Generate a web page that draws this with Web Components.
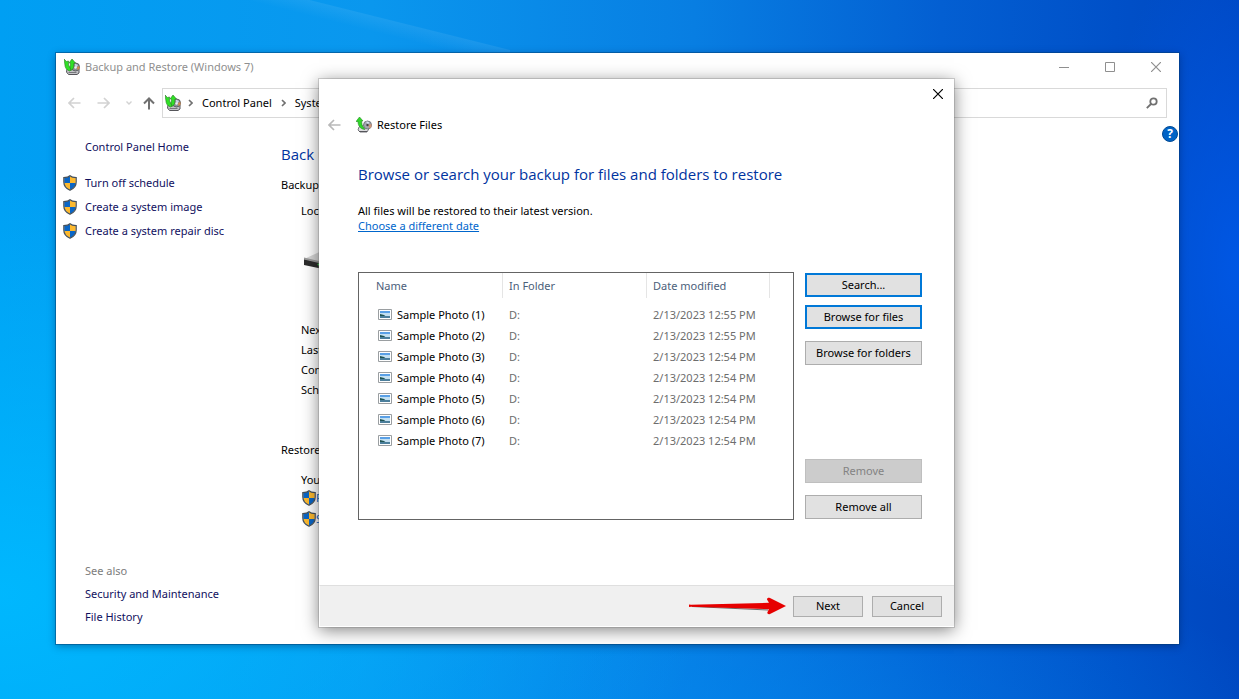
<!DOCTYPE html>
<html lang="en">
<head>
<meta charset="utf-8">
<meta name="viewport" content="width=device-width, initial-scale=1">
<title>Backup and Restore (Windows 7)</title>
<style>
  html, body { margin: 0; min-height: 100%; }
  body {
    font: 11px/18px "Noto Sans", "Open Sans", sans-serif;
    color: #000;
    --link: #10105e;
    --heading: #0033a0;
    --accent: #0078d7;
  }
</style>
</head>
<body>
<desk-top>
  <explorer-window>
    <restore-dialog></restore-dialog>
  </explorer-window>
</desk-top>

<script>
const define = (name, html, setup) => {
  const template = document.createElement('template');
  template.innerHTML = html;
  customElements.define(name, class extends HTMLElement {
    constructor() {
      super();
      this.attachShadow({ mode: 'open' }).append(template.content.cloneNode(true));
    }
    connectedCallback() { if (setup) setup(this, this.shadowRoot); }
  });
};

const ICONS = {
  backup: `<svg viewBox="0 0 16 16" width="16" height="16">
    <path d="M3 10l10-3 2 3v4l-2 1.500H4.500L2.500 13z" fill="#c4c4c8" stroke="#55555a"/>
    <circle cx="11.500" cy="8" r="4" fill="#8d9095" stroke="#5d6065"/>
    <path d="M10.500 4.500l3.500 1.500-2 3z" fill="#cdd6e8"/><path d="M13 8l2.500-1v3l-2 1z" fill="#d08a4e"/><circle cx="11.500" cy="8.500" r="1.200" fill="#eee"/>
    <path d="M4.500 13.500h8" stroke="#77777d"/>
    <path d="M0 0l2.500 2.500L4.500 2v4l3 5-2 1C2.500 11 .8 8.500.800 5z" fill="#2fe025" stroke="#2c7a26" stroke-width=".6"/>
    <path d="M8 0l3.500 4H10l-.5 5-2.500 2.500L6 8l.5-4H5z" fill="#2fe025" stroke="#2c7a26" stroke-width=".6"/>
  </svg>`,
  restore: `<svg viewBox="0 0 16 16" width="16" height="16">
    <path d="M3 10l9-3 2 3-3 5H4l-2-2z" fill="#dcdcdf" stroke="#77777c"/>
    <path d="M3 14.500h8" stroke="#55555a"/>
    <circle cx="11.500" cy="8" r="4" fill="#a2a8b0" stroke="#777b80"/>
    <path d="M10 4.500l3 .500-1 3z" fill="#dce6f4"/><path d="M12 8l3.500-1v3l-2 1.500z" fill="#cf9579"/><circle cx="11.500" cy="8" r="1.200" fill="#444"/>
    <path d="M3.500 0L7 4H5.500l.700 4.500L9 12.500C4.500 12 2 9 2 4.500H0z" fill="#2fd828" stroke="#248a20" stroke-width=".6"/>
  </svg>`,
  shield: `<svg viewBox="0 0 14 16" width="14" height="16">
    <path d="M7 1C5.500 2.200 3.500 2.600 1.200 2.700V7c0 4 2.500 6.500 5.800 8z" fill="#0a66c6"/>
    <path d="M7 1c1.500 1.200 3.500 1.600 5.800 1.700V7c0 4-2.500 6.500-5.800 8z" fill="#fdb92e"/>
    <path d="M1.200 8H7v7C4 13.500 1.500 11.500 1.200 8z" fill="#fdb92e"/>
    <path d="M7 8h5.800c-.3 3.500-2.800 5.500-5.800 7z" fill="#0a66c6"/>
    <path d="M7 .8C5.500 2.200 3.500 2.500 .8 2.600V7c0 4.200 2.700 6.800 6.200 8.300 3.500-1.500 6.200-4.100 6.200-8.300V2.600C10.500 2.500 8.500 2.200 7 .8z" fill="none" stroke="#47515a" stroke-width="1.200"/>
  </svg>`,
  left: `<svg viewBox="0 0 13 12" width="13" height="12"><path d="M12.500 6H1M6 1L1 6l5 5" fill="none" stroke="currentColor" stroke-width="1.700"/></svg>`,
  right: `<svg viewBox="0 0 13 12" width="13" height="12"><path d="M.5 6H12M7 1l5 5-5 5" fill="none" stroke="currentColor" stroke-width="1.700"/></svg>`,
  down: `<svg viewBox="0 0 6 4" width="6" height="4"><path d="M.5.500L3 3 5.500.500" fill="none" stroke="currentColor" stroke-width="1.400"/></svg>`,
  up: `<svg viewBox="0 0 12 13" width="12" height="13"><path d="M6 12.500V1.500M1 6.500l5-5 5 5" fill="none" stroke="currentColor" stroke-width="2"/></svg>`,
  chevron: `<svg viewBox="0 0 5 8" width="5" height="8"><path d="M1 1l3 3-3 3" fill="none" stroke="currentColor" stroke-width="1.600"/></svg>`,
  minimize: `<svg viewBox="0 0 10 11" width="10" height="11"><path d="M0 5.500h10" stroke="currentColor"/></svg>`,
  maximize: `<svg viewBox="0 0 10 10" width="10" height="10"><path d="M.5.500h9v9h-9z" fill="none" stroke="currentColor"/></svg>`,
  close: `<svg viewBox="0 0 10 10" width="10" height="10"><path d="M0 0l10 10M10 0L0 10" stroke="currentColor" stroke-width="1.200"/></svg>`,
  search: `<svg viewBox="0 0 12 12" width="12" height="12"><circle cx="7.500" cy="4.500" r="3.200" fill="none" stroke="currentColor" stroke-width="1.800"/><path d="M5 7L.8 11.200" stroke="currentColor" stroke-width="1.800"/></svg>`,
  photo: `<svg viewBox="0 0 14 12" width="14" height="12">
    <path d="M.5.500h13v10H.5z" fill="#fff" stroke="#9a9ea1"/>
    <path d="M2 2h10v3H2z" fill="#5aa0e6"/><path d="M2 4h10v3H2z" fill="#c3e0f2"/>
    <path d="M2 5l4 1 2 1.500H2z" fill="#1f5350"/><path d="M2 7h10v2H2z" fill="#4c7f9c"/>
  </svg>`,
  drive: `<svg viewBox="0 0 56 24" width="56" height="24">
    <path d="M0 10L22 0l34 8-18 12z" fill="#d8d8d8"/>
    <path d="M0 10l38 8v6L0 16z" fill="#2c2c2c"/><path d="M0 8.500l38 9v2L0 10.500z" fill="#9a9a9a"/>
    <path d="M38 18L56 8v6L38 24z" fill="#9a9a9a"/><circle cx="14.500" cy="15.500" r="1" fill="#35e04a"/>
  </svg>`
};

define('ui-icon', `<style>
  :host { display: inline-flex; flex: none; align-items: center; justify-content: center; }
  svg { display: block; }
</style>`, (host, root) => {
  if (root.querySelector('svg')) return;
  root.innerHTML += ICONS[host.getAttribute('name')];
  root.querySelector('svg').setAttribute('aria-hidden', 'true');
});

define('desk-top', `<style>
  :host {
    display: flex; box-sizing: border-box; min-height: 100vh; padding: 53px 60px 55px 56px;
    background:
      linear-gradient(194deg, transparent 0 48px, rgba(255, 255, 255, .07) 49px, transparent 64px) 250px 0 / 260px 60px no-repeat,
      radial-gradient(ellipse 150px 340px at 100% 38%, rgba(0, 92, 240, .75), transparent),
      radial-gradient(ellipse 700px 420px at 0% 85%, rgba(0, 186, 255, .9), transparent),
      radial-gradient(ellipse 620px 200px at 55% 105%, rgba(0, 135, 240, .55), transparent),
      linear-gradient(90deg, #009ff3 0%, #0a97ee 30%, #087ee2 56%, #035fd2 76%, #0050c8 90%, #0047c0 100%);
  }
</style><slot></slot>`);

define('title-bar', `<style>
  :host { display: flex; align-items: center; height: 28px; padding: 0 18px 0 8px; color: #8f8f8f; }
  h1 { flex: 1; margin: 0 0 0 5px; font: inherit; }
  nav { display: flex; align-items: center; gap: 36px; }
  button { display: flex; border: 0; padding: 0; background: none; color: inherit; }
</style>
<ui-icon name="backup"></ui-icon>
<h1><slot></slot></h1>
<nav aria-label="Window">
  <button type="button" aria-label="Minimize"><ui-icon name="minimize"></ui-icon></button>
  <button type="button" aria-label="Maximize"><ui-icon name="maximize"></ui-icon></button>
  <button type="button" aria-label="Close"><ui-icon name="close"></ui-icon></button>
</nav>`);

define('address-bar', `<style>
  :host { display: flex; align-items: center; padding: 7px 12px 0; color: #d2d2d2; }
  button { display: flex; border: 0; padding: 0; background: none; color: inherit; }
  .arrows { display: flex; align-items: center; gap: 16px; margin-right: 7px; }
  .up { color: #707070; }
  .last { display: flex; align-items: center; gap: 11px; }
  .path {
    flex: 1; display: flex; align-items: center; box-sizing: border-box; height: 30px;
    padding: 0 8px 0 2px; border: 1px solid #d9d9d9; color: #707070;
  }
  .crumbs { flex: 1; display: flex; align-items: center; gap: 9px; margin-left: 7px; }
  a { color: #000; text-decoration: none; white-space: nowrap; }
</style>
<div class="arrows">
  <button type="button" aria-label="Back"><ui-icon name="left"></ui-icon></button>
  <button type="button" aria-label="Forward"><ui-icon name="right"></ui-icon></button>
  <div class="last">
    <button type="button" aria-label="Recent locations"><ui-icon name="down"></ui-icon></button>
    <button type="button" class="up" aria-label="Up"><ui-icon name="up"></ui-icon></button>
  </div>
</div>
<div class="path">
  <ui-icon name="backup"></ui-icon>
  <div class="crumbs">
    <ui-icon name="chevron"></ui-icon><a href="#">Control Panel</a>
    <ui-icon name="chevron"></ui-icon><a href="#">System</a>
  </div>
  <button type="button" aria-label="Search"><ui-icon name="search"></ui-icon></button>
</div>`);

define('side-bar', `<style>
  :host { display: flex; flex-direction: column; width: 225px; box-sizing: border-box; padding: 20px 0 18px 7px; }
  a { color: var(--link); text-decoration: none; }
  .home, .also { padding-left: 22px; }
  ul { list-style: none; margin: 18px 0 0; padding: 0; display: grid; gap: 6px; }
  li { display: flex; align-items: center; gap: 8px; }
  .also { display: grid; gap: 5px; margin-top: auto; color: #7c7c7c; }
</style>
<a class="home" href="#">Control Panel Home</a>
<ul>
  <li><ui-icon name="shield"></ui-icon><a href="#">Turn off schedule</a></li>
  <li><ui-icon name="shield"></ui-icon><a href="#">Create a system image</a></li>
  <li><ui-icon name="shield"></ui-icon><a href="#">Create a system repair disc</a></li>
</ul>
<div class="also">
  <span>See also</span>
  <a href="#">Security and Maintenance</a>
  <a href="#">File History</a>
</div>`);

define('backup-status', `<style>
  :host { display: block; flex: 1; min-width: 0; padding-top: 24px; white-space: nowrap; }
  h2 { margin: 0 0 10px; font: 400 15px/24px "Open Sans", "Noto Sans", sans-serif; color: var(--heading); }
  h3 { margin: 0; font: inherit; }
  section { padding-left: 20px; }
  .location { padding-top: 8px; }
  .drive { display: flex; height: 100px; padding: 29px 0 0 3px; box-sizing: border-box; align-items: flex-start; }
  .facts { line-height: 20px; margin-bottom: 41px; }
  .facts p, .restore p { margin: 0; }
  .restore { display: grid; gap: 3px; padding-top: 12px; }
  .restore p { margin-bottom: -3px; }
  .restore div { display: flex; align-items: center; padding-left: 1px; }
  a { color: #0066cc; text-decoration: none; }
</style>
<h2>Back up</h2>
<h3>Backup</h3>
<section class="location">Location:
  <div class="drive"><ui-icon name="drive"></ui-icon></div>
</section>
<section class="facts">
  <p>Next backup:</p><p>Last backup:</p><p>Contents:</p><p>Schedule:</p>
</section>
<h3>Restore</h3>
<section class="restore">
  <p>You can</p>
  <div><ui-icon name="shield"></ui-icon><a href="#">Restore</a></div>
  <div><ui-icon name="shield"></ui-icon><a href="#">Select</a></div>
</section>`);

define('help-button', `<style>
  :host { display: block; padding: 8px 1px 0 0; }
  button {
    display: grid; place-items: center; width: 16px; height: 16px; padding: 0; border: 1px solid #004a94;
    border-radius: 50%; background: #0063c6; color: #fff; font: 700 12px/14px "Open Sans", sans-serif;
  }
</style><button type="button" aria-label="Help">?</button>`);

define('explorer-window', `<style>
  :host {
    position: relative; flex: 1; display: flex; flex-direction: column; background: #fff;
    box-shadow: 0 0 0 1px rgba(0, 60, 110, .45), 0 2px 8px rgba(0, 20, 60, .4);
  }
  main { flex: 1; display: flex; }
  ::slotted(restore-dialog) { position: absolute; left: 263px; top: 26px; }
</style>
<title-bar>Backup and Restore (Windows 7)</title-bar>
<address-bar></address-bar>
<main>
  <side-bar></side-bar>
  <backup-status></backup-status>
  <help-button></help-button>
</main>
<slot></slot>`);

define('push-button', `<style>
  :host { display: block; }
  button {
    display: block; width: 100%; height: 24px; box-sizing: border-box; padding: 0 6px; border: 1px solid #adadad;
    background: #e1e1e1; color: #000; font: inherit; line-height: 18px; white-space: nowrap;
  }
  :host([active]) button { border: 2px solid var(--accent); padding: 0 5px; }
  :host([compact]) button { width: 70px; height: 21px; }
  button:disabled { background: #ccc; border-color: #bfbfbf; color: #838383; }
</style><button type="button"><slot></slot></button>`, (host, root) => {
  root.querySelector('button').disabled = host.hasAttribute('disabled');
});

define('file-list', `<style>
  :host { display: block; flex: 1; box-sizing: border-box; height: 248px; border: 1px solid #646464; }
  table { width: 411px; border-collapse: separate; border-spacing: 0; table-layout: fixed; }
  th { height: 25px; padding: 0 0 0 6px; border-right: 1px solid #e5e5e5; font-weight: 400; text-align: left; color: #4c607a; }
  th:first-child { padding-left: 17px; }
  td { height: 21px; padding: 0 0 0 6px; color: #6d6d6d; white-space: nowrap; }
  td:first-child { padding-left: 19px; color: #000; }
  .gap td { height: 6px; }
  .file { display: flex; align-items: center; gap: 5px; }
</style>
<table>
  <colgroup><col style="width:144px"><col style="width:144px"><col style="width:123px"></colgroup>
  <thead><tr><th scope="col">Name</th><th scope="col">In Folder</th><th scope="col">Date modified</th></tr></thead>
  <tbody><tr class="gap" aria-hidden="true"><td colspan="3"></td></tr></tbody>
</table>`, (host, root) => {
  const body = root.querySelector('tbody');
  if (body.rows.length > 1) return;
  ['12:55', '12:55', '12:54', '12:54', '12:54', '12:54', '12:54'].forEach((time, i) => {
    body.insertAdjacentHTML('beforeend', `<tr>
      <td><span class="file"><ui-icon name="photo"></ui-icon>Sample Photo (${i + 1})</span></td>
      <td>D:</td><td>2/13/2023 ${time} PM</td></tr>`);
  });
});

define('red-arrow', `<style>
  :host { display: block; line-height: 0; }
</style>
<svg viewBox="0 0 100 20" width="100" height="20" aria-hidden="true">
  <path d="M3 10.500L79 14" stroke="#4a4a4a" stroke-width="1" opacity=".8"/>
  <path d="M0 8.500l2 .3L80 6.800 78 3.500c0-1.800 1.500-2.300 3-1.500L97 10 81 18c-1.600.6-3-.2-2.600-1.800l1.500-3L2 10.800l-2 .2z" fill="#e60000"/>
</svg>`);

define('restore-dialog', `<style>
  :host {
    display: flex; flex-direction: column; width: 635px; background: #fff;
    box-shadow: 0 0 0 1px rgba(120, 120, 120, .3), 0 3px 16px rgba(0, 0, 0, .5);
  }
  .top { display: flex; justify-content: flex-end; padding: 10px 11px 0 0; }
  .top button, .title button { display: flex; border: 0; padding: 0; background: none; color: #000; }
  .title { display: flex; align-items: center; padding: 17px 0 0 9px; }
  .title button { color: #b9b9b9; }
  .title ui-icon { margin: 0 5px 0 15px; }
  .title button ui-icon { margin: 0; }
  .content { padding: 28px 32px 65px 39px; }
  h2 { margin: 0 0 17px; font: 400 15px/24px "Open Sans", "Noto Sans", sans-serif; color: var(--heading); }
  .intro { margin: 0 0 39px; line-height: 15px; }
  .intro a { display: block; width: max-content; color: #0066cc; }
  .columns { display: flex; gap: 11px; }
  .actions { display: flex; flex-direction: column; width: 117px; padding: 1px 0; gap: 12px; box-sizing: border-box; }
  .pair { display: grid; gap: 8px; }
  .bottom { margin-top: auto; display: grid; gap: 12px; }
  footer {
    display: flex; justify-content: flex-end; align-items: center; height: 40px; padding-right: 12px;
    border: 1px solid #fff; border-top-color: #dfdfdf; border-right: 0; background: #f0f0f0;
  }
  .next { margin: 0 9px 0 4px; }
</style>
<div class="top"><button type="button" aria-label="Close"><ui-icon name="close"></ui-icon></button></div>
<div class="title">
  <button type="button" aria-label="Back"><ui-icon name="left"></ui-icon></button>
  <ui-icon name="restore"></ui-icon><span>Restore Files</span>
</div>
<div class="content">
  <h2>Browse or search your backup for files and folders to restore</h2>
  <p class="intro">All files will be restored to their latest version.
    <a href="#">Choose a different date</a></p>
  <div class="columns">
    <file-list></file-list>
    <div class="actions">
      <div class="pair">
        <push-button active>Search...</push-button>
        <push-button active>Browse for files</push-button>
      </div>
      <push-button>Browse for folders</push-button>
      <div class="bottom">
        <push-button disabled>Remove</push-button>
        <push-button>Remove all</push-button>
      </div>
    </div>
  </div>
</div>
<footer>
  <red-arrow></red-arrow>
  <push-button class="next" compact>Next</push-button>
  <push-button compact>Cancel</push-button>
</footer>`);
</script>
</body>
</html>
